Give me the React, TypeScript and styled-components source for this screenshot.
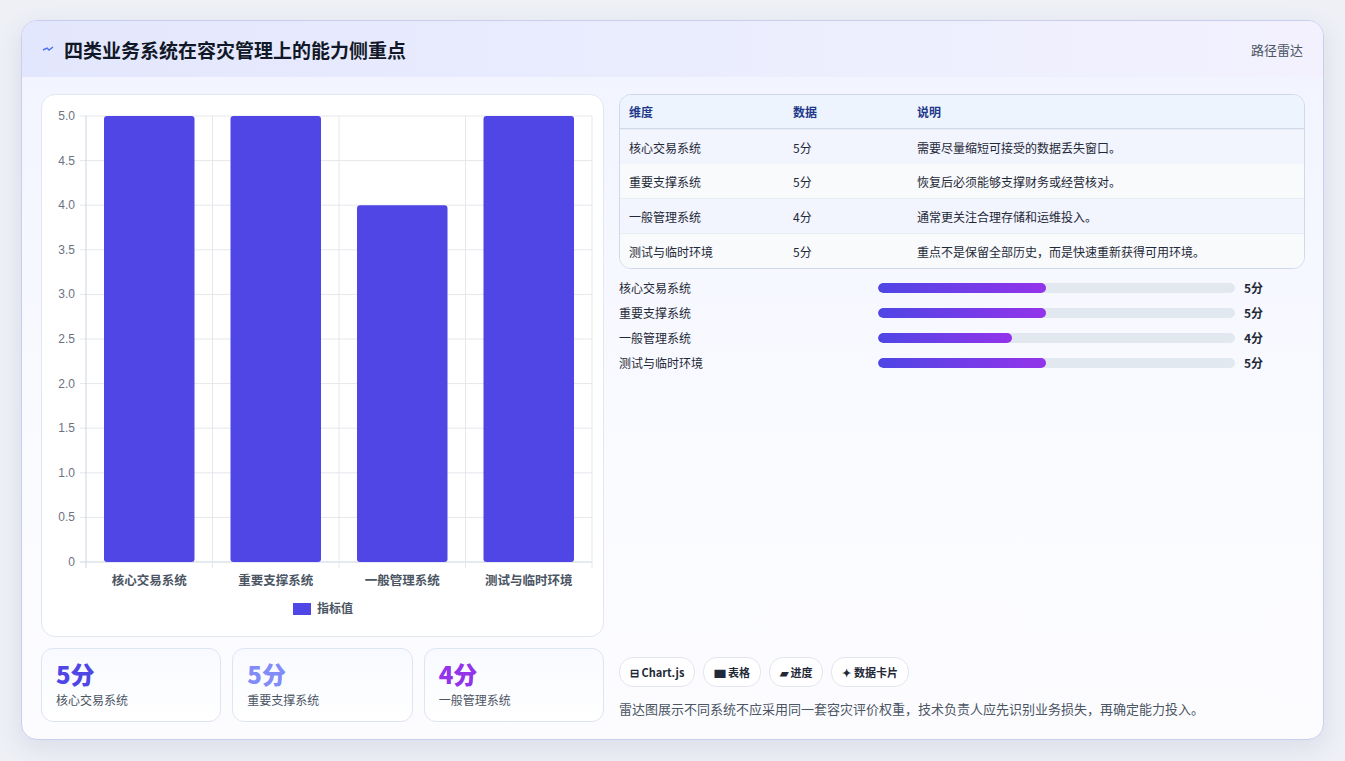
import React from "react";
import styled, { createGlobalStyle } from "styled-components";

const G = createGlobalStyle`
  html,body{margin:0;padding:0;background:#eef0f6;}
  body{font-family:"Noto Sans CJK SC","Noto Sans",sans-serif;}
`;
const Page = styled.div`padding:20px 21px;height:761px;box-sizing:border-box;`;
const Card = styled.div`
  height:720px;box-sizing:border-box;border:1px solid #c9cdf0;border-radius:16px;
  background:linear-gradient(180deg,#f1f3ff 0%,#fafbff 60%,#fcfcff 100%);
  box-shadow:0 8px 24px rgba(80,80,140,.12);overflow:hidden;display:flex;flex-direction:column;`;
const Header = styled.div`
  height:56px;flex:none;display:flex;align-items:center;justify-content:space-between;padding:0 20px;
  background:linear-gradient(90deg,#e3e7fd 0%,#eceefe 60%,#f3f1fe 100%);`;
const Title = styled.h1`margin:0;font-size:19px;font-weight:700;color:#111827;display:flex;align-items:center;gap:10px;`;
const Tag = styled.span`font-size:13px;color:#4b5563;`;
const Body = styled.div`flex:1;display:flex;gap:15px;padding:17px 18px 18px 19px;min-height:0;`;
const Left = styled.div`width:563px;display:flex;flex-direction:column;gap:11px;`;
const ChartBox = styled.div`height:543px;background:#fff;border:1px solid #e2e6ef;border-radius:14px;box-sizing:border-box;`;
const Stats = styled.div`display:grid;grid-template-columns:repeat(3,1fr);gap:11px;`;
const Stat = styled.div`height:74px;box-sizing:border-box;border:1px solid #dde4f2;border-radius:12px;background:linear-gradient(180deg,#f8faff,#fff);padding:10px 14px;`;
const StatNum = styled.div<{c:string}>`font-size:24px;font-weight:800;color:${p=>p.c};line-height:30px;`;
const StatLbl = styled.div`font-size:12px;color:#4b5563;margin-top:2px;`;
const Right = styled.div`flex:1;display:flex;flex-direction:column;`;
const Table = styled.table`width:100%;border-collapse:separate;border-spacing:0;border:1px solid #cfd9ea;border-radius:12px;overflow:hidden;font-size:12px;
  th{background:#eef4fe;color:#1e3a8a;text-align:left;font-weight:700;height:33px;border-bottom:1px solid #cfd9ea;padding:0 9px;}
  td{height:34px;padding:0 9px;color:#1f2937;border-top:1px solid #e7ecf5;}
  tr:nth-child(2) td{border-top:none;}
  tbody tr:nth-child(odd) td{background:#f2f4fe;}
  tbody tr:nth-child(even) td{background:#f8fafc;}`;
const Bars = styled.div`display:flex;flex-direction:column;gap:8px;margin-top:10px;`;
const BarRow = styled.div`display:grid;grid-template-columns:259px 357px 40px;align-items:center;gap:0;height:17px;font-size:12px;color:#1f2937;`;
const Track = styled.div`height:10px;border-radius:5px;background:#e2e8f0;overflow:hidden;`;
const Fill = styled.div`height:100%;border-radius:5px;background:linear-gradient(90deg,#4f46e5,#9333ea);`;
const Val = styled.span`font-weight:700;padding-left:9px;`;
const Spacer = styled.div`flex:1;`;
const Chips = styled.div`display:flex;gap:8px;`;
const Chip = styled.span`height:28px;padding:0 10px;border:1px solid #e2e6ef;border-radius:14px;background:#fff;font-size:11px;font-weight:700;color:#1f2937;display:inline-flex;align-items:center;gap:4px;`;
const Note = styled.p`margin:12px 0 3px;font-size:13px;color:#4b5563;`;

const rows = [
  ["核心交易系统", 5, "需要尽量缩短可接受的数据丢失窗口。"],
  ["重要支撑系统", 5, "恢复后必须能够支撑财务或经营核对。"],
  ["一般管理系统", 4, "通常更关注合理存储和运维投入。"],
  ["测试与临时环境", 5, "重点不是保留全部历史，而是快速重新获得可用环境。"],
] as const;

function Chart() {
  const x0 = 44, x1 = 550, y0 = 21, y1 = 467;
  const ticks = Array.from({ length: 11 }, (_, i) => i * 0.5);
  const cw = (x1 - x0) / 4;
  const yy = (v: number) => y1 - (v / 5) * (y1 - y0);
  return (
    <svg width="561" height="541" style={{ display: "block" }}>
      {ticks.map(t => (
        <g key={t}>
          <line x1={x0 - 6} x2={x1} y1={yy(t)} y2={yy(t)} stroke={t === 0 ? "#cbd5e1" : "#e5e7eb"} />
          <text x={x0 - 11} y={yy(t) + 4} textAnchor="end" fontSize="12" fill="#6b7280" fontFamily="Liberation Sans, sans-serif">{t === 0 ? "0" : t.toFixed(1)}</text>
        </g>
      ))}
      {[0, 1, 2, 3, 4].map(i => (
        <line key={i} x1={x0 + i * cw} x2={x0 + i * cw} y1={y0} y2={y1 + 6} stroke={i === 0 ? "#cbd5e1" : "#e5e7eb"} />
      ))}
      {rows.map((r, i) => {
        const bx = x0 + i * cw + 18;
        return (
          <g key={i}>
            <rect x={bx} y={yy(r[1])} width={cw - 36} height={y1 - yy(r[1])} rx="3" fill="#4f46e5" />
            <text x={x0 + i * cw + cw / 2} y={y1 + 23} textAnchor="middle" fontSize="12.5" fontWeight="700" fill="#4b5563">{r[0]}</text>
          </g>
        );
      })}
      <rect x="251" y="508" width="18" height="12" fill="#4f46e5" />
      <text x="275" y="518" fontSize="12" fontWeight="700" fill="#4b5563">指标值</text>
    </svg>
  );
}

export default function App() {
  return (
    <Page>
      <G />
      <Card>
        <Header>
          <Title>
            <svg width="12" height="10" viewBox="0 0 12 10"><path d="M1 6 L5 4 L7 6 L11 3" stroke="#4f6ef0" strokeWidth="1.4" fill="none" /></svg>
            四类业务系统在容灾管理上的能力侧重点
          </Title>
          <Tag>路径雷达</Tag>
        </Header>
        <Body>
          <Left>
            <ChartBox><Chart /></ChartBox>
            <Stats>
              <Stat><StatNum c="#4f46e5">5分</StatNum><StatLbl>核心交易系统</StatLbl></Stat>
              <Stat><StatNum c="#818cf8">5分</StatNum><StatLbl>重要支撑系统</StatLbl></Stat>
              <Stat><StatNum c="#9333ea">4分</StatNum><StatLbl>一般管理系统</StatLbl></Stat>
            </Stats>
          </Left>
          <Right>
            <Table>
              <thead><tr><th style={{ width: 146 }}>维度</th><th style={{ width: 106 }}>数据</th><th>说明</th></tr></thead>
              <tbody>
                {rows.map(r => <tr key={r[0]}><td>{r[0]}</td><td>{r[1]}分</td><td>{r[2]}</td></tr>)}
              </tbody>
            </Table>
            <Bars>
              {rows.map(r => (
                <BarRow key={r[0]}>
                  <span>{r[0]}</span>
                  <Track><Fill style={{ width: `${r[1] === 5 ? 47 : 37.6}%` }} /></Track>
                  <Val>{r[1]}分</Val>
                </BarRow>
              ))}
            </Bars>
            <Spacer />
            <Chips>
              <Chip>⊟ Chart.js</Chip>
              <Chip>▆ 表格</Chip>
              <Chip>▰ 进度</Chip>
              <Chip>✦ 数据卡片</Chip>
            </Chips>
            <Note>雷达图展示不同系统不应采用同一套容灾评价权重，技术负责人应先识别业务损失，再确定能力投入。</Note>
          </Right>
        </Body>
      </Card>
    </Page>
  );
}
